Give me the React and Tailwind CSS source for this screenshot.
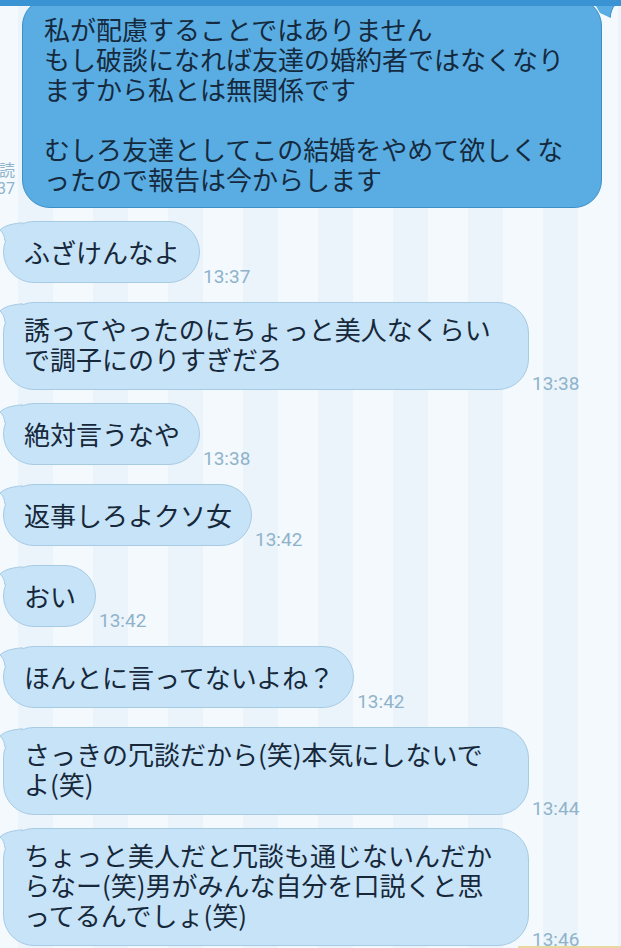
import React from "react";

const TIME = "font-['Roboto',sans-serif] text-[19px] leading-none text-[#8fb3cb]";

function Tail() {
  return (
    <svg
      className="absolute left-[-4px] top-[-1px] w-[24px] h-[24px] overflow-visible"
      viewBox="0 0 24 24"
    >
      <path d="M22.7 1.8 C 14 2.5, 5 4, 0 9 C 3 11.5, 4.5 15, 4.8 19.7 L 15 15 Z" fill="#c6e3f8" />
      <path
        d="M22.7 1.8 C 14 2.5, 5 4, 0 9 C 3 11.5, 4.5 15, 4.8 19.7"
        fill="none"
        stroke="#a8cbe4"
        strokeWidth="1"
      />
    </svg>
  );
}

function SentTail() {
  return (
    <svg
      className="absolute right-[-14px] top-[-1px] w-[24px] h-[24px] overflow-visible"
      viewBox="0 0 24 24"
    >
      <path d="M1.3 1.8 C 10 2.5, 19 4, 24 7 C 21 10, 19.5 15, 19.2 19.7 L 9 15 Z" fill="#5aade2" />
      <path
        d="M24 7 C 21 10, 19.5 15, 19.2 19.7"
        fill="none"
        stroke="#3d8ec8"
        strokeWidth="1"
      />
    </svg>
  );
}

function Recv({ lines, time, wide }) {
  return (
    <div className={`flex items-end ${wide ? "mb-[13px]" : "mb-[19px]"}`}>
      <div
        className={`relative ml-[3px] flex min-h-[62px] flex-col justify-center whitespace-nowrap rounded-[31px] border border-[#a8cbe4] bg-[#c6e3f8] pl-[20px] pr-[19px] text-[26px] leading-[30px] text-[#16283a] ${
          wide ? "w-[526px] pb-[15px] pt-[11px]" : "py-[10px]"
        }`}
      >
        <Tail />
        {lines.map((l) => (
          <div key={l} className="relative">
            {l}
          </div>
        ))}
      </div>
      <span className={`${TIME} ml-[3px] mb-[-3px]`}>{time}</span>
    </div>
  );
}

const messages = [
  { lines: ["ふざけんなよ"], time: "13:37" },
  { lines: ["誘ってやったのにちょっと美人なくらい", "で調子にのりすぎだろ"], time: "13:38", wide: true },
  { lines: ["絶対言うなや"], time: "13:38" },
  { lines: ["返事しろよクソ女"], time: "13:42" },
  { lines: ["おい"], time: "13:42" },
  { lines: ["ほんとに言ってないよね？"], time: "13:42" },
  { lines: ["さっきの冗談だから(笑)本気にしないで", "よ(笑)"], time: "13:44", wide: true },
  {
    lines: ["ちょっと美人だと冗談も通じないんだか", "らなー(笑)男がみんな自分を口説くと思", "ってるんでしょ(笑)"],
    time: "13:46",
    wide: true,
  },
];

export default function App() {
  return (
    <div className="relative h-[948px] w-[621px] overflow-hidden bg-[repeating-linear-gradient(90deg,#f3f9fd_0px,#f3f9fd_18px,#ecf4fb_18px,#ecf4fb_53px,#f3f9fd_53px,#f3f9fd_75px)] font-['Noto_Sans_CJK_JP','Noto_Sans',sans-serif]">
      <div className="flex flex-col">
        <div className="ml-[-45px] mt-[-2px] flex items-end">
          <div className="mb-[10px] w-[60px] text-right font-['Roboto','Noto_Sans_CJK_JP',sans-serif] text-[16px] leading-[18px] text-[#8fb3cb]">
            <div>既読</div>
            <div>13:37</div>
          </div>
          <div className="relative ml-[7px] w-[580px] whitespace-nowrap rounded-[28px] border border-[#3d8ec8] bg-[#5aade2] pb-[13px] pl-[21px] pt-[15px] text-[26px] leading-[30px] text-[#152a3e]">
            <SentTail />
            <div className="relative">私が配慮することではありません</div>
            <div className="relative">もし破談になれば友達の婚約者ではなくなり</div>
            <div className="relative">ますから私とは無関係です</div>
            <div className="relative">&nbsp;</div>
            <div className="relative">むしろ友達としてこの結婚をやめて欲しくな</div>
            <div className="relative">ったので報告は今からします</div>
          </div>
        </div>
        <div className="mt-[13px] flex flex-col">
          {messages.map((m, i) => (
            <Recv key={i} lines={m.lines} time={m.time} wide={m.wide} />
          ))}
        </div>
      </div>
      <div className="absolute left-0 right-0 top-0 h-[6px] bg-[#3a93d3]" />
      <div className="absolute bottom-0 right-0 h-[2px] w-[103px] bg-[#e8d79e]" />
    </div>
  );
}
